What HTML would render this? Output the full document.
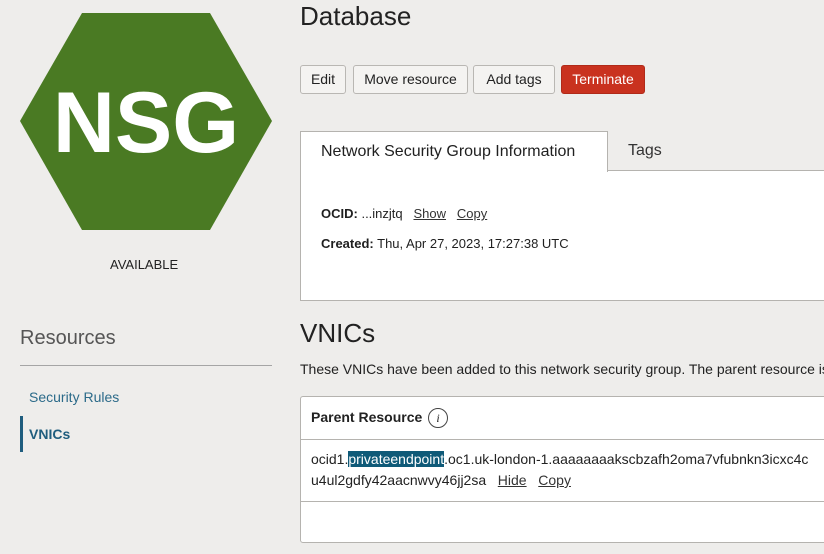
<!DOCTYPE html>
<html><head><meta charset="utf-8"><style>
*{margin:0;padding:0;box-sizing:border-box}
body{width:824px;height:554px;overflow:hidden;background:#eeedeb;font-family:"Liberation Sans",sans-serif;color:#1f1f1f;position:relative}
.a{position:absolute;white-space:nowrap}
.btn{position:absolute;top:65px;height:29px;border:1px solid #b9b7b3;border-radius:3px;background:#f4f3f1;font-size:14px;line-height:27px;text-align:center;color:#222}
u{text-decoration:underline;color:#333}
</style></head><body>
<svg class="a" style="left:0;top:0" width="300" height="250">
<polygon points="82,13 210,13 272,121 210,230 82,230 20,121" fill="#4a7a23"/>
<text x="146" y="152" text-anchor="middle" font-family="Liberation Sans" font-weight="bold" font-size="86" fill="#fff">NSG</text>
</svg>
<div class="a" style="left:110px;top:257px;font-size:13px;color:#222">AVAILABLE</div>
<div class="a" style="left:20px;top:327px;font-size:20px;color:#555;font-weight:300">Resources</div>
<div class="a" style="left:20px;top:365px;width:252px;height:1px;background:#a5a5a5"></div>
<div class="a" style="left:29px;top:389px;font-size:14px;color:#2b6a89">Security Rules</div>
<div class="a" style="left:20px;top:416px;width:3px;height:36px;background:#1f5d7e"></div>
<div class="a" style="left:29px;top:426px;font-size:14px;color:#1f5d7e;font-weight:bold">VNICs</div>

<div class="a" style="left:300px;top:1px;font-size:26px;color:#222">Database</div>
<div class="btn" style="left:300px;width:46px">Edit</div>
<div class="btn" style="left:353px;width:115px">Move resource</div>
<div class="btn" style="left:473px;width:82px">Add tags</div>
<div class="btn" style="left:561px;width:84px;background:#c9321f;border-color:#b02a19;color:#fff">Terminate</div>

<div class="a" style="left:300px;top:170px;width:530px;height:131px;background:#fff;border:1px solid #b5b3af"></div>
<div class="a" style="left:300px;top:131px;width:308px;height:41px;background:#fff;border:1px solid #b5b3af;border-bottom:none"></div>
<div class="a" style="left:321px;top:143px;font-size:16px;color:#1f1f1f">Network Security Group Information</div>
<div class="a" style="left:628px;top:142px;font-size:16px;color:#333">Tags</div>
<div class="a" style="left:321px;top:206px;font-size:13px"><b>OCID:</b> ...inzjtq &nbsp;&nbsp;<u>Show</u> &nbsp;&nbsp;<u>Copy</u></div>
<div class="a" style="left:321px;top:236px;font-size:13px"><b>Created:</b> Thu, Apr 27, 2023, 17:27:38 UTC</div>

<div class="a" style="left:300px;top:318px;font-size:26px;color:#222">VNICs</div>
<div class="a" style="left:300px;top:361px;font-size:14px;color:#222">These VNICs have been added to this network security group. The parent resource is</div>

<div class="a" style="left:300px;top:396px;width:530px;height:147px;background:#fff;border:1px solid #b5b3af;border-radius:3px"></div>
<div class="a" style="left:300px;top:439px;width:530px;height:1px;background:#b5b3af"></div>
<div class="a" style="left:300px;top:501px;width:530px;height:1px;background:#b5b3af"></div>
<div class="a" style="left:311px;top:409px;font-size:14px;font-weight:bold;color:#222">Parent Resource</div>
<div class="a" style="left:428px;top:408px;width:20px;height:20px;border:1px solid #444;border-radius:50%;font-size:12px;font-style:italic;text-align:center;line-height:18px;font-family:'Liberation Serif',serif">i</div>
<div class="a" style="left:311px;top:451px;font-size:14px;color:#222">ocid1.<span style="background:#0f5a78;color:#fff">privateendpoint</span>.oc1.uk-london-1.aaaaaaaakscbzafh2oma7vfubnkn3icxc4c</div>
<div class="a" style="left:311px;top:472px;font-size:14px;color:#222">u4ul2gdfy42aacnwvy46jj2sa &nbsp;&nbsp;<u>Hide</u> &nbsp;&nbsp;<u>Copy</u></div>
</body></html>
